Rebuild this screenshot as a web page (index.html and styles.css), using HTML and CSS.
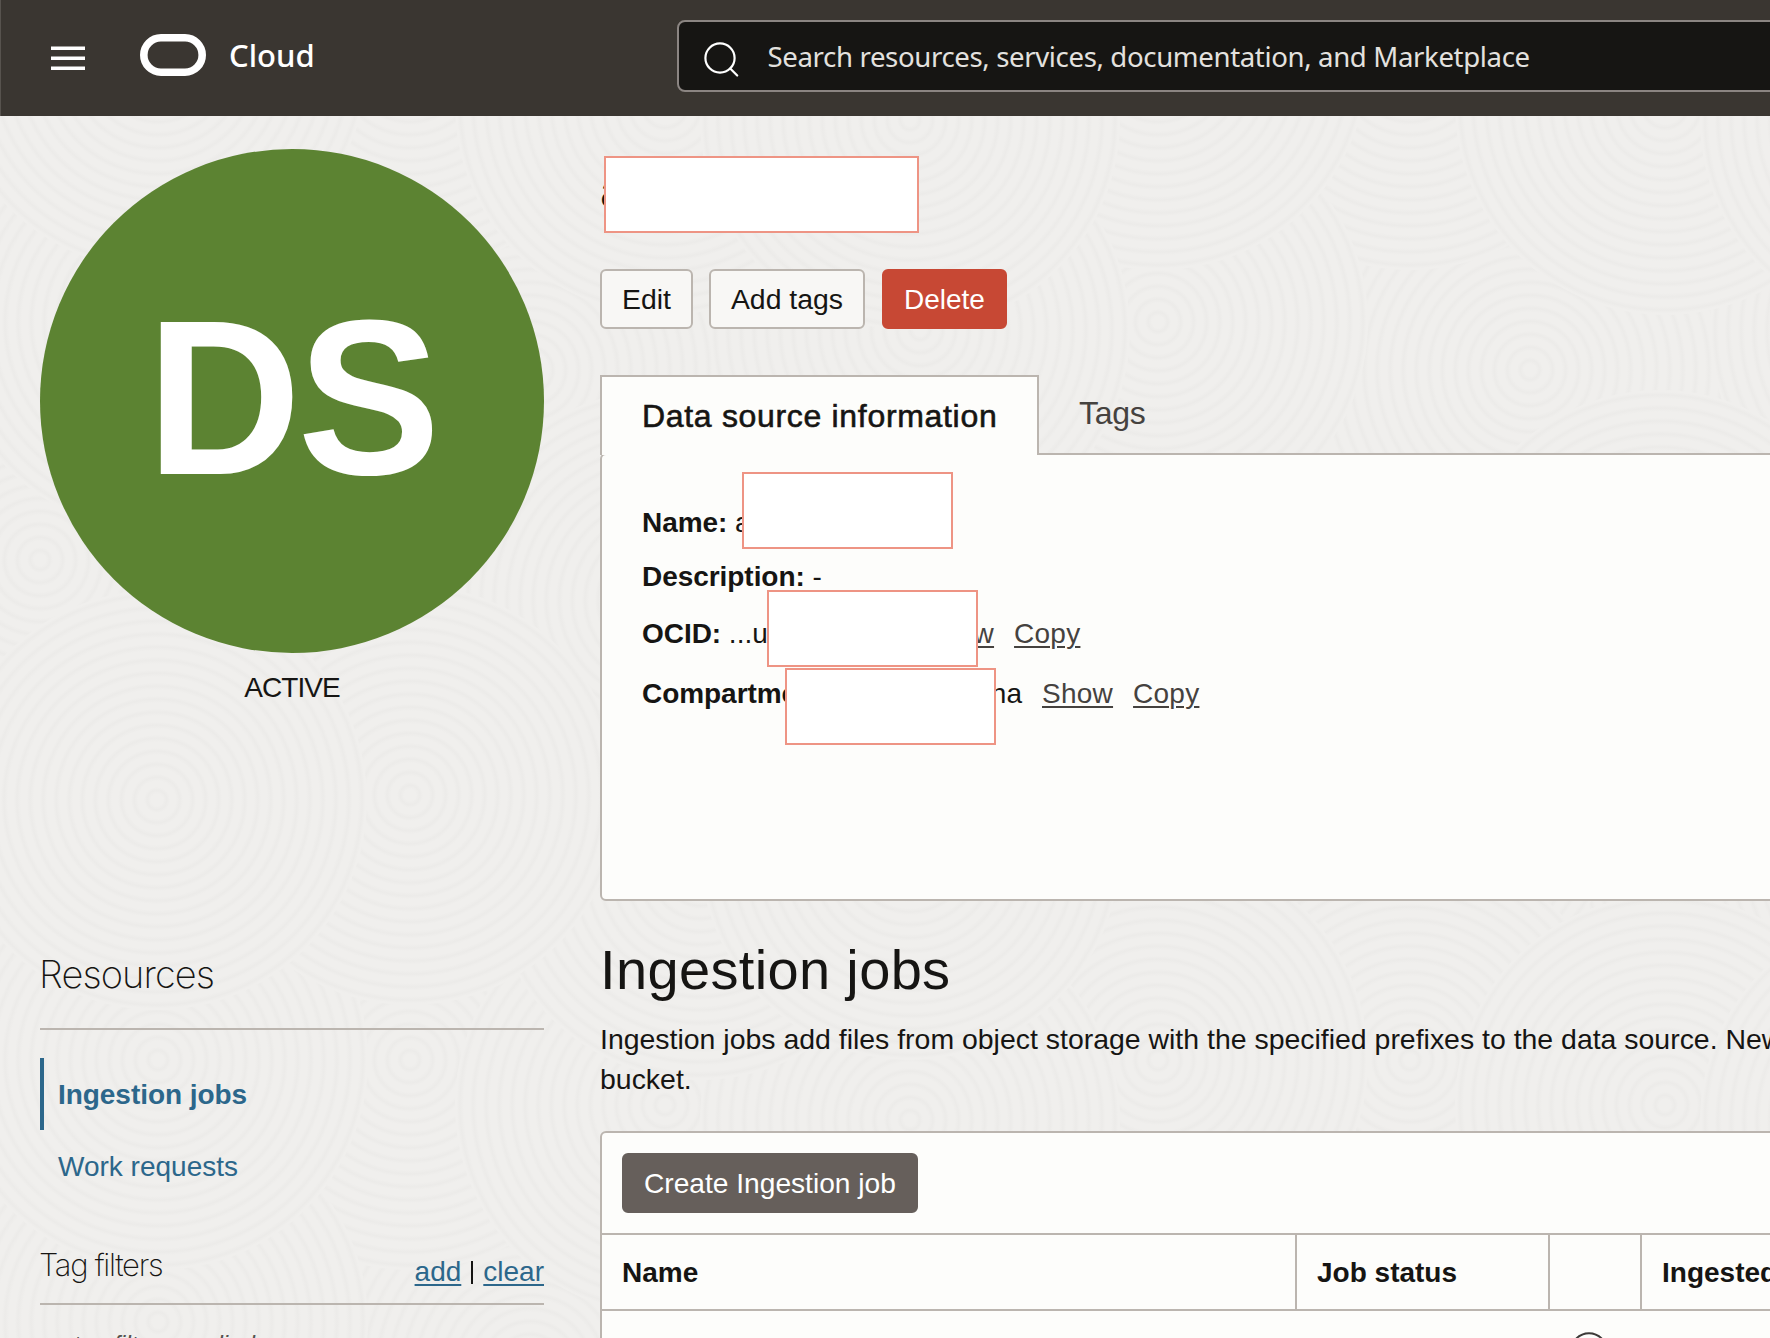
FILE: index.html
```html
<!DOCTYPE html>
<html lang="en">
<head>
<meta charset="utf-8">
<title>Data source details</title>
<link rel="stylesheet" href="styles.css">
</head>
<body>
<div class="page">
  <svg class="texture" width="1770" height="1338" aria-hidden="true">
    <defs>
      <radialGradient id="rings" r="0.031" spreadMethod="repeat">
        <stop offset="0" stop-color="#f0efed"/>
        <stop offset="0.45" stop-color="#f0efed"/>
        <stop offset="0.75" stop-color="#ecebe9"/>
        <stop offset="1" stop-color="#f0efed"/>
      </radialGradient>
      <g id="tile" fill="url(#rings)">
        <circle cx="530" cy="370" r="210"/>
        <circle cx="900" cy="560" r="210"/>
        <circle cx="40" cy="560" r="210"/>
        <circle cx="700" cy="870" r="210"/>
        <circle cx="410" cy="60" r="210"/>
        <circle cx="920" cy="330" r="210"/>
        <circle cx="660" cy="600" r="210"/>
        <circle cx="910" cy="850" r="210"/>
        <circle cx="158" cy="322" r="210"/>
        <circle cx="665" cy="105" r="210"/>
        <circle cx="910" cy="120" r="210"/>
        <circle cx="158" cy="60" r="210"/>
        <circle cx="410" cy="795" r="210"/>
        <circle cx="157" cy="800" r="210"/>
      </g>
    </defs>
    <use href="#tile" x="-1000" y="0"/>
    <use href="#tile" x="1000" y="-1000"/>
    <use href="#tile" x="0" y="-1000"/>
    <use href="#tile" x="1000" y="0"/>
    <use href="#tile" x="1000" y="1000"/>
    <use href="#tile" x="0" y="1000"/>
    <use href="#tile" x="0" y="0"/>
  </svg>

  <header class="topbar">
    <svg class="menu-icon" width="34" height="26" viewBox="0 0 34 26"><path d="M0 2.2h34M0 12.2h34M0 22.2h34" stroke="#fff" stroke-width="3.6"/></svg>
    <svg class="logo" width="66" height="42" viewBox="0 0 66 42"><rect x="3.8" y="3.8" width="58.4" height="34.4" rx="17.2" fill="none" stroke="#fff" stroke-width="7.6"/></svg>
    <span class="brand">Cloud</span>
    <div class="search">
      <svg class="search-icon" width="36" height="36" viewBox="0 0 36 36" fill="none" stroke="#fff" stroke-width="2.2" stroke-linecap="round"><circle cx="16" cy="16" r="14.6"/><path d="M26.2 26.5l7 7"/></svg>
      <span class="search-text">Search resources, services, documentation, and Marketplace</span>
    </div>
  </header>

  <div class="content">
    <aside class="side">
      <div class="badge"><span>DS</span></div>
      <div class="state">ACTIVE</div>
      <h2 class="side-title">Resources</h2>
      <nav class="side-nav">
        <a class="nav-item current">Ingestion jobs</a>
        <a class="nav-item">Work requests</a>
      </nav>
      <div class="filters">
        <h3 class="filters-title">Tag filters</h3>
        <div class="filters-actions"><a>add</a><i class="bar"></i><a>clear</a></div>
      </div>
      <p class="filters-empty">no tag filters applied</p>
    </aside>

    <main class="main">
      <h1 class="title">a<span class="mask mask-title"></span></h1>
      <div class="actions">
        <button class="btn">Edit</button>
        <button class="btn">Add tags</button>
        <button class="btn danger">Delete</button>
      </div>
      <div class="tabs">
        <div class="tab active">Data source information</div>
        <div class="tab">Tags</div>
      </div>
      <section class="panel">
        <div class="row"><b class="name">Name:</b> a</div>
        <div class="row"><b class="desc">Description:</b> -</div>
        <div class="row ocid"><span class="field"><span><b>OCID:</b> ...u</span></span><a>Show</a><a>Copy</a></div>
        <div class="row compartment"><span class="field"><b>Compartme</b><span>na</span></span><a>Show</a><a>Copy</a></div>
        <span class="mask mask-name"></span>
        <span class="mask mask-ocid"></span>
        <span class="mask mask-comp"></span>
      </section>

      <h2 class="section-title">Ingestion jobs</h2>
      <p class="section-text">Ingestion jobs add files from object storage with the specified prefixes to the data source. New<br>bucket.</p>
      <section class="jobs">
        <div class="toolbar"><button class="btn primary">Create Ingestion job</button></div>
        <div class="grid head">
          <div>Name</div><div>Job status</div><div></div><div>Ingested</div>
        </div>
        <div class="grid body">
          <div></div><div></div><div class="info"><svg width="38" height="38" viewBox="0 0 38 38"><circle cx="19" cy="19" r="17.8" fill="none" stroke="#3c3a38" stroke-width="2"/></svg></div><div></div>
        </div>
      </section>
    </main>
  </div>
</div>
</body>
</html>
```
FILE: styles.css
```css
* { box-sizing: border-box; }
body { margin: 0; }
h1, h2, h3, p { margin: 0; font-weight: 400; }
.page {
  position: relative;
  width: 1770px;
  height: 1338px;
  overflow: hidden;
  background: #f0efed;
  color: #161513;
  font: 28px/40px "Liberation Sans", Arial, sans-serif;
  white-space: nowrap;
}
.texture { position: absolute; inset: 0; }

.topbar {
  position: relative;
  display: flex;
  align-items: flex-start;
  height: 116px;
  padding-left: 50px;
  background: #3a3631;
  border-left: 1px solid #57534e;
}
.topbar > *, .search-icon { flex: none; }
.menu-icon { margin-top: 46px; }
.logo { margin: 34px 0 0 55px; }
.brand {
  width: 448px;
  margin: 35px 0 0 23px;
  color: #fff;
  font: 500 31px/40px "Noto Sans", sans-serif;
}
.search {
  display: flex;
  width: 1200px;
  height: 72px;
  margin-top: 20px;
  border: 2px solid #8b8582;
  border-radius: 8px;
  background: #161513;
}
.search-icon { margin: 20px 0 0 24.5px; }
.search-text {
  margin: 14px 0 0 28px;
  color: #e3e1df;
  font: 27.6px/40px "Noto Sans", sans-serif;
  letter-spacing: -.37px;
}

.content { position: relative; display: flex; gap: 56px; padding-left: 40px; }
.side { flex: none; width: 504px; padding-top: 33px; }
.badge {
  display: flex;
  justify-content: center;
  height: 504px;
  border-radius: 50%;
  background: #5c8332;
  color: #fff;
  font-size: 221px;
  font-weight: 700;
  line-height: 498px;
  letter-spacing: -4px;
}
.badge span { transform: scaleX(.97); }
.state { padding-top: 15px; text-align: center; letter-spacing: -.9px; }
.side-title {
  margin-top: 243px;
  padding-bottom: 30px;
  border-bottom: 2px solid #bbb5af;
  font: 200 38px/47px Inter, "Liberation Sans", sans-serif;
  letter-spacing: -.9px;
  text-indent: -1px;
}
.side-nav { display: flex; flex-direction: column; padding-top: 28px; }
.nav-item {
  height: 72px;
  padding-left: 14px;
  border-left: 4px solid transparent;
  color: #2c678b;
  line-height: 74px;
}
.current { border-color: #2c678b; font-weight: 700; letter-spacing: -.05px; }
.filters {
  display: flex;
  justify-content: space-between;
  height: 103px;
  padding-top: 43px;
  border-bottom: 2px solid #bbb5af;
}
.filters-title { font: 200 31px/40px Inter, "Liberation Sans", sans-serif; letter-spacing: -1.3px; text-indent: -1px; }
.filters-actions { display: flex; padding-top: 7px; color: #2c678b; }
.filters-actions a { text-decoration: underline; text-underline-offset: 3px; text-decoration-thickness: 2px; }
.bar { width: 2px; height: 23px; margin: 9px 10px 0; background: #161513; }
.filters-empty { padding-top: 20px; font-size: 24px; font-style: italic; color: #55524f; }

.main { flex: none; width: 1300px; padding-top: 45px; }
.title { position: relative; height: 60px; font-size: 46px; line-height: 60px; }
.mask { position: absolute; width: 211px; height: 77px; border: 2px solid #ee9484; background: #fff; }
.mask-title { left: 4px; top: -5px; width: 315px; }
.mask-name { left: 140px; top: 17px; }
.mask-ocid { left: 165px; top: 135px; }
.mask-comp { left: 183px; top: 213px; }
.actions { display: flex; gap: 16px; padding-top: 48px; }
.btn {
  height: 60px;
  padding: 1px 20px 0;
  border: 2px solid #bbb5af;
  border-radius: 6px;
  background: #f8f7f5;
  color: #161513;
  font: 28.4px/55px "Liberation Sans", Arial, sans-serif;
}
.danger { margin-left: 1px; border-color: #c74834; background: #c74834; color: #fff; font-size: 28px; }
.primary { border-color: #665f5b; background: #665f5b; color: #fff; font-size: 28.15px; }
.tabs { display: flex; padding-top: 46px; }
.tab { padding: 0 40px; color: #45423f; font-size: 32px; line-height: 77px; letter-spacing: -.3px; }
.active {
  position: relative;
  z-index: 1;
  width: 439px;
  height: 80px;
  margin-bottom: -2px;
  border: 2px solid #bbb5af;
  border-bottom: 0;
  background: #fdfdfb;
  color: #161513;
  line-height: 78px;
  letter-spacing: .68px;
  -webkit-text-stroke: .6px #161513;
}
.panel {
  position: relative;
  height: 448px;
  padding: 48px 0 0 40px;
  border: 2px solid #bbb5af;
  border-radius: 6px;
  background: #fdfdfb;
}
.row { display: block; height: 40px; margin-bottom: 14px; }
.row b { letter-spacing: -.05px; }
.ocid, .compartment { display: flex; gap: 20px; }
.ocid { margin: 17px 0 20px; }
.ocid .field { width: 261px; }
.compartment .field { display: flex; justify-content: space-between; width: 380px; }
.row a { color: #45423f; letter-spacing: .25px; text-decoration: underline; text-underline-offset: 3px; text-decoration-thickness: 2px; }
.section-title { padding-top: 35px; font-size: 56px; line-height: 68px; letter-spacing: .35px; }
.section-text { padding-top: 15px; font-size: 28.45px; }
.jobs {
  height: 400px;
  margin-top: 32px;
  border: 2px solid #bbb5af;
  border-radius: 6px;
  background: #fdfdfb;
}
.toolbar { height: 102px; padding: 20px; border-bottom: 2px solid #bbb5af; }
.grid { display: grid; grid-template-columns: 693px 253px 92px 1fr; }
.head { height: 76px; border-bottom: 2px solid #bbb5af; font-weight: 700; line-height: 76px; }
.head div { padding-left: 20px; }
.head div + div { border-left: 2px solid #bbb5af; }
.info { padding: 21px 0 0 22px; }
```
